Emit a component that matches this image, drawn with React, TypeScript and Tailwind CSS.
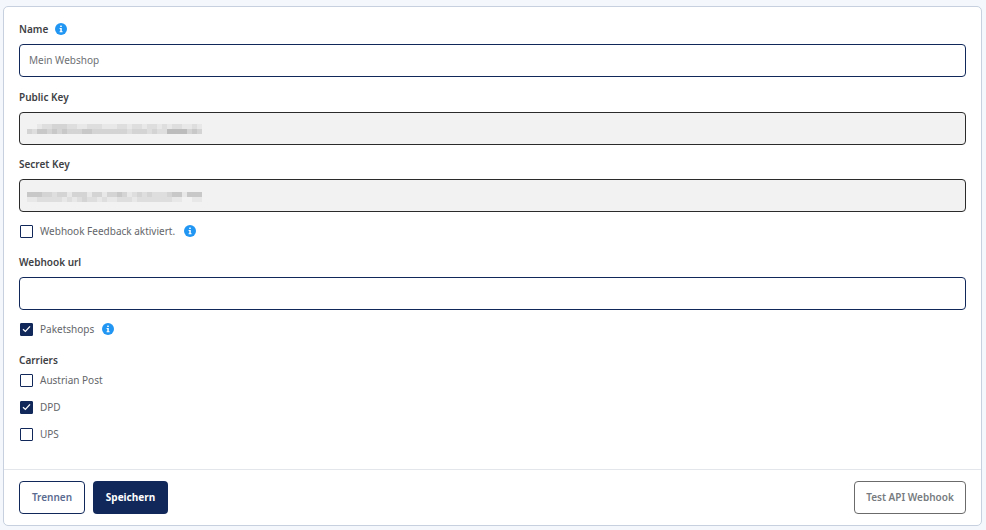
import React from "react";

const pub = [
  "00122333221122211122122122121221121",
  "32443434333443333333233323225555343",
];
const sec = [
  "44433233133313313343123232223441444",
  "11222221212322121122212222222110011",
];

function Mosaic({ rows }: { rows: string[] }) {
  const shades = ["#f2f2f2", "#e8e8e8", "#dedede", "#d4d4d4", "#c8c8c8", "#bcbcbc", "#b0b0b0"];
  return (
    <svg width="175" height={rows.length * 5} shapeRendering="crispEdges" className="block">
      {rows.map((r, y) =>
        r.split("").map((c, x) => (
          <rect key={`${x}-${y}`} x={x * 5} y={y * 5} width="5" height="5" fill={shades[Number(c)]} />
        ))
      )}
    </svg>
  );
}

function Info() {
  return (
    <svg width="12" height="12" viewBox="0 0 12 12" className="block shrink-0">
      <circle cx="6" cy="6" r="6" fill="#2196f3" />
      <rect x="5.2" y="2.6" width="1.6" height="1.4" fill="#fff" />
      <path d="M4.6 5h2.2v3.2h.8v1H4.6v-1h.7V6h-.7z" fill="#fff" />
    </svg>
  );
}

function Check({ checked, label, info, gap = "ml-[8px]", className = "" }: { checked?: boolean; label: string; info?: boolean; gap?: string; className?: string }) {
  return (
    <div className={`flex items-center h-[14px] pl-[1px] ${className}`}>
      <span className={`w-[13px] h-[13px] rounded-[1px] border border-[#11295a] flex items-center justify-center ${checked ? "bg-[#11295a]" : "bg-white"}`}>
        {checked && (
          <svg width="9" height="8" viewBox="0 0 9 8" fill="none">
            <path d="M1 4.2 L3.4 6.4 L8 1.4" stroke="#fff" strokeWidth="1.3" />
          </svg>
        )}
      </span>
      <span className="ml-[7px] text-[10px] leading-[14px] text-[#63666a]">{label}</span>
      {info && <span className={gap}><Info /></span>}
    </div>
  );
}

function Label({ children, className = "" }: { children: React.ReactNode; className?: string }) {
  return <div className={`text-[10px] leading-[14px] font-semibold text-[#3e4145] ${className}`}>{children}</div>;
}

export default function App() {
  return (
    <div className="w-[986px] h-[530px] bg-[#f4f8fd] pt-[6px] pl-[3px] pr-[4px] pb-[4px] overflow-hidden font-['Noto_Sans',sans-serif]">
      <div className="h-[520px] bg-white border border-[#c6d0de] rounded-[5px] flex flex-col">
        <div className="flex-1 px-[15px] pt-[15px]">
          <div className="flex items-center h-[14px]">
            <Label>Name</Label>
            <span className="ml-[7px]"><Info /></span>
          </div>
          <div className="mt-[8px] h-[33px] border border-[#11295a] rounded-[4px] flex items-center pl-[9px] text-[10px] text-[#6d7074]">Mein Webshop</div>
          <Label className="mt-[13px]">Public Key</Label>
          <div className="mt-[8px] h-[33px] border border-[#2b2b2b] rounded-[4px] bg-[#f2f2f2] flex items-center pl-[7px]"><Mosaic rows={pub} /></div>
          <Label className="mt-[12px]">Secret Key</Label>
          <div className="mt-[8px] h-[33px] border border-[#2b2b2b] rounded-[4px] bg-[#f2f2f2] flex items-center pl-[7px] pt-[3px]"><Mosaic rows={sec} /></div>
          <Check className="mt-[12px]" label="Webhook Feedback aktiviert." info gap="ml-[9px]" />
          <Label className="mt-[17px]">Webhook url</Label>
          <div className="mt-[8px] h-[33px] border border-[#11295a] rounded-[4px]" />
          <Check className="mt-[12px]" checked label="Paketshops" info />
          <Label className="mt-[17px]">Carriers</Label>
          <Check className="mt-[6px]" label="Austrian Post" />
          <Check className="mt-[13px]" checked label="DPD" />
          <Check className="mt-[13px]" label="UPS" />
        </div>
        <div className="h-[56px] border-t border-[#e3e6ea] px-[15px] flex items-center">
          <button className="w-[66px] h-[33px] border border-[#11295a] rounded-[4px] bg-white text-[10px] font-semibold text-[#5a6b91]">Trennen</button>
          <button className="ml-[8px] w-[75px] h-[33px] rounded-[4px] bg-[#11295a] text-[10px] font-bold text-white">Speichern</button>
          <button className="ml-auto w-[112px] h-[33px] border border-[#6b6b6b] rounded-[4px] bg-white text-[10px] font-semibold text-[#777b80]">Test API Webhook</button>
        </div>
      </div>
    </div>
  );
}
